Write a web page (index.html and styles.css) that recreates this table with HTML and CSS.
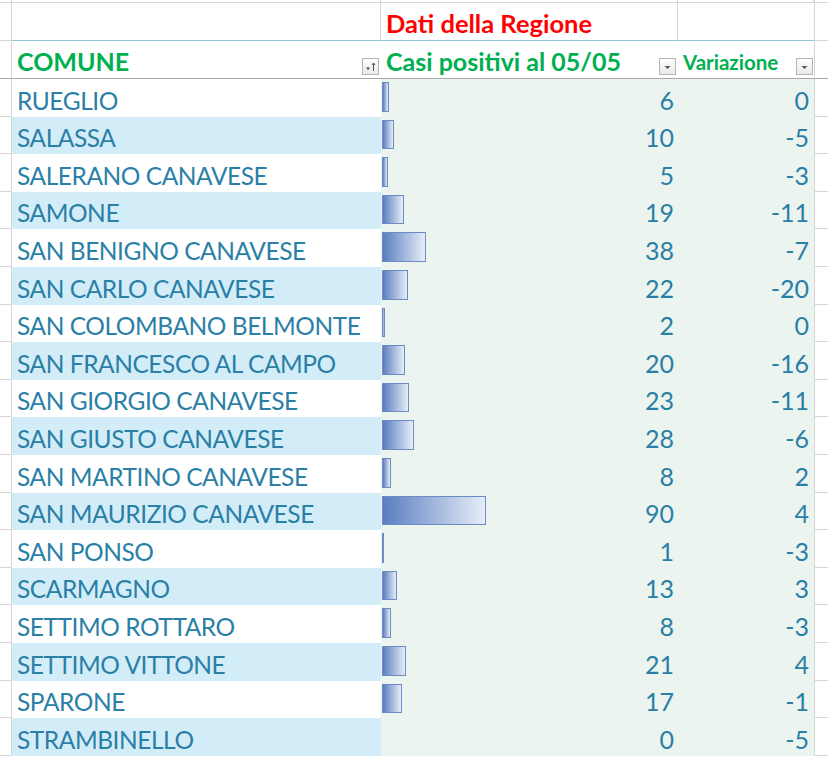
FILE: index.html
```html
<!DOCTYPE html>
<html lang="it">
<head>
<meta charset="utf-8">
<title>Dati della Regione</title>
<link rel="stylesheet" href="styles.css">
</head>
<body>
<div class="sheet">
  <div class="row row-top">
    <div class="c a"></div><div class="c b"></div><div class="c cc"></div><div class="c d"></div><div class="c e"></div>
  </div>
  <div class="row row-title">
    <div class="c a"></div>
    <div class="c b"></div>
    <div class="c cc"><span class="title-red">Dati della Regione</span></div>
    <div class="c d"></div>
    <div class="c e"></div>
  </div>
  <div class="row row-head">
    <div class="c a"></div>
    <div class="c b"><span class="head">COMUNE</span>
      <span class="fbtn"><svg width="15" height="15" viewBox="0 0 15 15"><path d="M3 8.5h4l-2 2.5z" fill="#444"/><path d="M10.5 4v8" stroke="#555" stroke-width="1"/><path d="M9 6l1.5-2 1.5 2" fill="none" stroke="#555" stroke-width="1"/></svg></span>
    </div>
    <div class="c cc"><span class="head">Casi positivi al 05/05</span>
      <span class="fbtn"><svg width="15" height="15" viewBox="0 0 15 15"><path d="M4.5 7h6l-3 3z" fill="#555"/></svg></span>
    </div>
    <div class="c d"><span class="head small">Variazione</span>
      <span class="fbtn"><svg width="15" height="15" viewBox="0 0 15 15"><path d="M4.5 7h6l-3 3z" fill="#555"/></svg></span>
    </div>
    <div class="c e"></div>
  </div>

  <div class="row data"><div class="c a"></div><div class="c b">RUEGLIO</div><div class="c cc"><span class="bar" style="width:7px"></span><span class="num">6</span></div><div class="c d"><span class="num">0</span></div><div class="c e"></div></div>
  <div class="row data alt"><div class="c a"></div><div class="c b">SALASSA</div><div class="c cc"><span class="bar" style="width:12px"></span><span class="num">10</span></div><div class="c d"><span class="num">-5</span></div><div class="c e"></div></div>
  <div class="row data"><div class="c a"></div><div class="c b">SALERANO CANAVESE</div><div class="c cc"><span class="bar" style="width:6px"></span><span class="num">5</span></div><div class="c d"><span class="num">-3</span></div><div class="c e"></div></div>
  <div class="row data alt"><div class="c a"></div><div class="c b">SAMONE</div><div class="c cc"><span class="bar" style="width:22px"></span><span class="num">19</span></div><div class="c d"><span class="num">-11</span></div><div class="c e"></div></div>
  <div class="row data"><div class="c a"></div><div class="c b">SAN BENIGNO CANAVESE</div><div class="c cc"><span class="bar" style="width:44px"></span><span class="num">38</span></div><div class="c d"><span class="num">-7</span></div><div class="c e"></div></div>
  <div class="row data alt"><div class="c a"></div><div class="c b">SAN CARLO CANAVESE</div><div class="c cc"><span class="bar" style="width:26px"></span><span class="num">22</span></div><div class="c d"><span class="num">-20</span></div><div class="c e"></div></div>
  <div class="row data"><div class="c a"></div><div class="c b">SAN COLOMBANO BELMONTE</div><div class="c cc"><span class="bar" style="width:3px"></span><span class="num">2</span></div><div class="c d"><span class="num">0</span></div><div class="c e"></div></div>
  <div class="row data alt"><div class="c a"></div><div class="c b">SAN FRANCESCO AL CAMPO</div><div class="c cc"><span class="bar" style="width:23px"></span><span class="num">20</span></div><div class="c d"><span class="num">-16</span></div><div class="c e"></div></div>
  <div class="row data"><div class="c a"></div><div class="c b">SAN GIORGIO CANAVESE</div><div class="c cc"><span class="bar" style="width:27px"></span><span class="num">23</span></div><div class="c d"><span class="num">-11</span></div><div class="c e"></div></div>
  <div class="row data alt"><div class="c a"></div><div class="c b">SAN GIUSTO CANAVESE</div><div class="c cc"><span class="bar" style="width:32px"></span><span class="num">28</span></div><div class="c d"><span class="num">-6</span></div><div class="c e"></div></div>
  <div class="row data"><div class="c a"></div><div class="c b">SAN MARTINO CANAVESE</div><div class="c cc"><span class="bar" style="width:9px"></span><span class="num">8</span></div><div class="c d"><span class="num">2</span></div><div class="c e"></div></div>
  <div class="row data alt"><div class="c a"></div><div class="c b">SAN MAURIZIO CANAVESE</div><div class="c cc"><span class="bar" style="width:104px"></span><span class="num">90</span></div><div class="c d"><span class="num">4</span></div><div class="c e"></div></div>
  <div class="row data"><div class="c a"></div><div class="c b">SAN PONSO</div><div class="c cc"><span class="bar" style="width:2px"></span><span class="num">1</span></div><div class="c d"><span class="num">-3</span></div><div class="c e"></div></div>
  <div class="row data alt"><div class="c a"></div><div class="c b">SCARMAGNO</div><div class="c cc"><span class="bar" style="width:15px"></span><span class="num">13</span></div><div class="c d"><span class="num">3</span></div><div class="c e"></div></div>
  <div class="row data"><div class="c a"></div><div class="c b">SETTIMO ROTTARO</div><div class="c cc"><span class="bar" style="width:9px"></span><span class="num">8</span></div><div class="c d"><span class="num">-3</span></div><div class="c e"></div></div>
  <div class="row data alt"><div class="c a"></div><div class="c b">SETTIMO VITTONE</div><div class="c cc"><span class="bar" style="width:24px"></span><span class="num">21</span></div><div class="c d"><span class="num">4</span></div><div class="c e"></div></div>
  <div class="row data"><div class="c a"></div><div class="c b">SPARONE</div><div class="c cc"><span class="bar" style="width:20px"></span><span class="num">17</span></div><div class="c d"><span class="num">-1</span></div><div class="c e"></div></div>
  <div class="row data alt"><div class="c a"></div><div class="c b">STRAMBINELLO</div><div class="c cc"><span class="bar none"></span><span class="num">0</span></div><div class="c d"><span class="num">-5</span></div><div class="c e"></div></div>
</div>
</body>
</html>
```

FILE: styles.css
```css
* { box-sizing: border-box; }
html, body { margin: 0; padding: 0; background: #fff; }
body {
  font-family: Lato, "Open Sans", "Liberation Sans", sans-serif;
  overflow: hidden;
}
.sheet { width: 828px; }
.row {
  display: grid;
  grid-template-columns: 12px 369px 297px 136px 14px;
  height: 37.6px;
}
.c { min-width: 0; overflow: hidden; white-space: nowrap; }
.a { border-right: 1px solid #d6d6d6; border-bottom: 1px solid #d6d6d6; }
.e { border-left: 1px solid #d6d6d6; border-bottom: 1px solid #d6d6d6; }

.row-top { height: 3px; }
.row-top .c { border-bottom: 1px solid #d6d6d6; }
.row-top .b, .row-top .cc, .row-top .d { border-right: 1px solid #d6d6d6; }

.row-title { height: 38px; }
.row-title .b, .row-title .cc, .row-title .d {
  border-right: 1px solid #d6d6d6;
  border-bottom: 1px solid #8ec4dc;
}
.row-title .d { border-right: 0; }
.row-title .cc {
  display: flex;
  align-items: flex-end;
  padding: 0 0 2px 5px;
}
.title-red {
  color: #ff0000;
  font-weight: 700;
  font-size: 25.5px;
  line-height: 30px;
}

.row-head { height: 38px; }
.row-head .c { border-bottom: 1px solid #a6a6a6; }
.row-head .b, .row-head .cc, .row-head .d {
  display: flex;
  align-items: flex-end;
  justify-content: space-between;
  padding: 0 2px 2px 5px;
}
.row-head .d { padding-left: 5px; padding-right: 1px; }
.head {
  color: #00b050;
  font-weight: 700;
  font-size: 25px;
  line-height: 30px;
}
.head.small { font-size: 20.5px; line-height: 27px; }
.fbtn {
  width: 17px;
  height: 17px;
  margin-bottom: 1px;
  border: 1px solid #b4b4b4;
  background: linear-gradient(#ffffff, #e9e9e9);
  display: flex;
  align-items: center;
  justify-content: center;
}
.fbtn svg { display: block; }

.data .b {
  color: #2a7fa6;
  font-size: 24.5px;
  letter-spacing: -0.45px;
  line-height: 30px;
  display: flex;
  align-items: flex-end;
  padding: 0 0 1px 5px;
}
.data.alt .b { background: #d3edf8; }
.data .cc, .data .d {
  background: #ebf4ef;
  display: flex;
  justify-content: space-between;
  color: #2a7fa6;
  font-size: 25px;
  line-height: 30px;
}
.data .cc { padding: 0 4px 2px 1px; }
.data .d { justify-content: flex-end; padding: 0 5px 2px 0; }
.num { align-self: flex-end; }
.bar {
  align-self: stretch;
  margin: 3px 0 3px;
  border: 1px solid #6a8bc6;
  background: linear-gradient(to right, #5a7ec0, #e6edf7);
}
.bar.none { border: 0; background: none; width: 0; }
```
